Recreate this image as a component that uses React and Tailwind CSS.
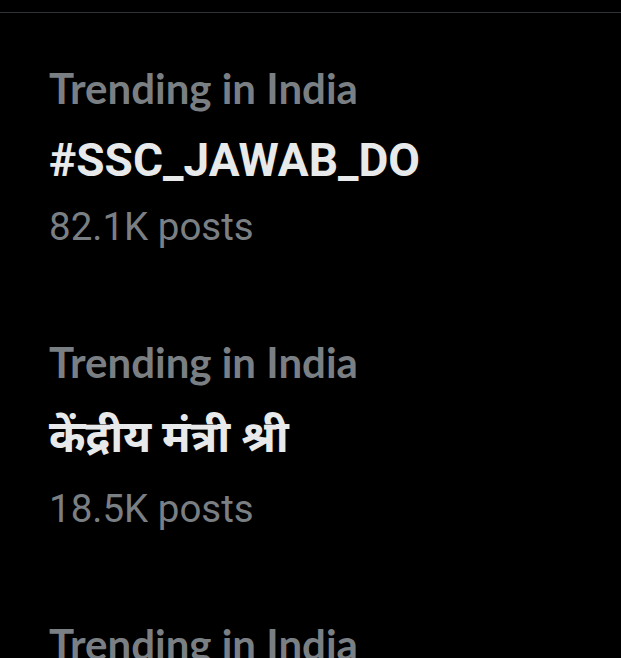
const trends = [
  { label: "Trending in India", topic: "#SSC_JAWAB_DO", posts: "82.1K posts" },
  { label: "Trending in India", topic: "केंद्रीय मंत्री श्री", posts: "18.5K posts", tall: true },
  { label: "Trending in India", topic: "", posts: "" },
];

const TrendItem = ({ label, topic, posts, tall }) => (
  <div className="flex flex-col pl-[49px] pt-[50px] pb-[37px]">
    <span className="font-['Lato',sans-serif] font-bold text-[42px] leading-[50px] text-[#7a7f84] whitespace-nowrap">
      {label}
    </span>
    {topic && (
      <span
        className={
          tall
            ? "mt-[13px] pt-[4px] pb-[7px] font-['Roboto','Noto_Sans_Devanagari','Noto_Sans',sans-serif] font-bold text-[44px] leading-normal text-[#e7e9ea] whitespace-nowrap"
            : "mt-[13px] font-['Roboto',sans-serif] font-bold text-[46px] leading-normal text-[#e7e9ea] whitespace-nowrap"
        }
      >
        {topic}
      </span>
    )}
    {posts && (
      <span className="mt-[9px] font-['Roboto',sans-serif] text-[38.5px] leading-[46px] text-[#7a7f84]">
        {posts}
      </span>
    )}
  </div>
);

export default function App() {
  return (
    <div className="h-[658px] overflow-hidden bg-black pt-[12px]">
      <div className="border-t border-[#2f3336]">
        {trends.map((t, i) => (
          <TrendItem key={i} {...t} />
        ))}
      </div>
    </div>
  );
}
